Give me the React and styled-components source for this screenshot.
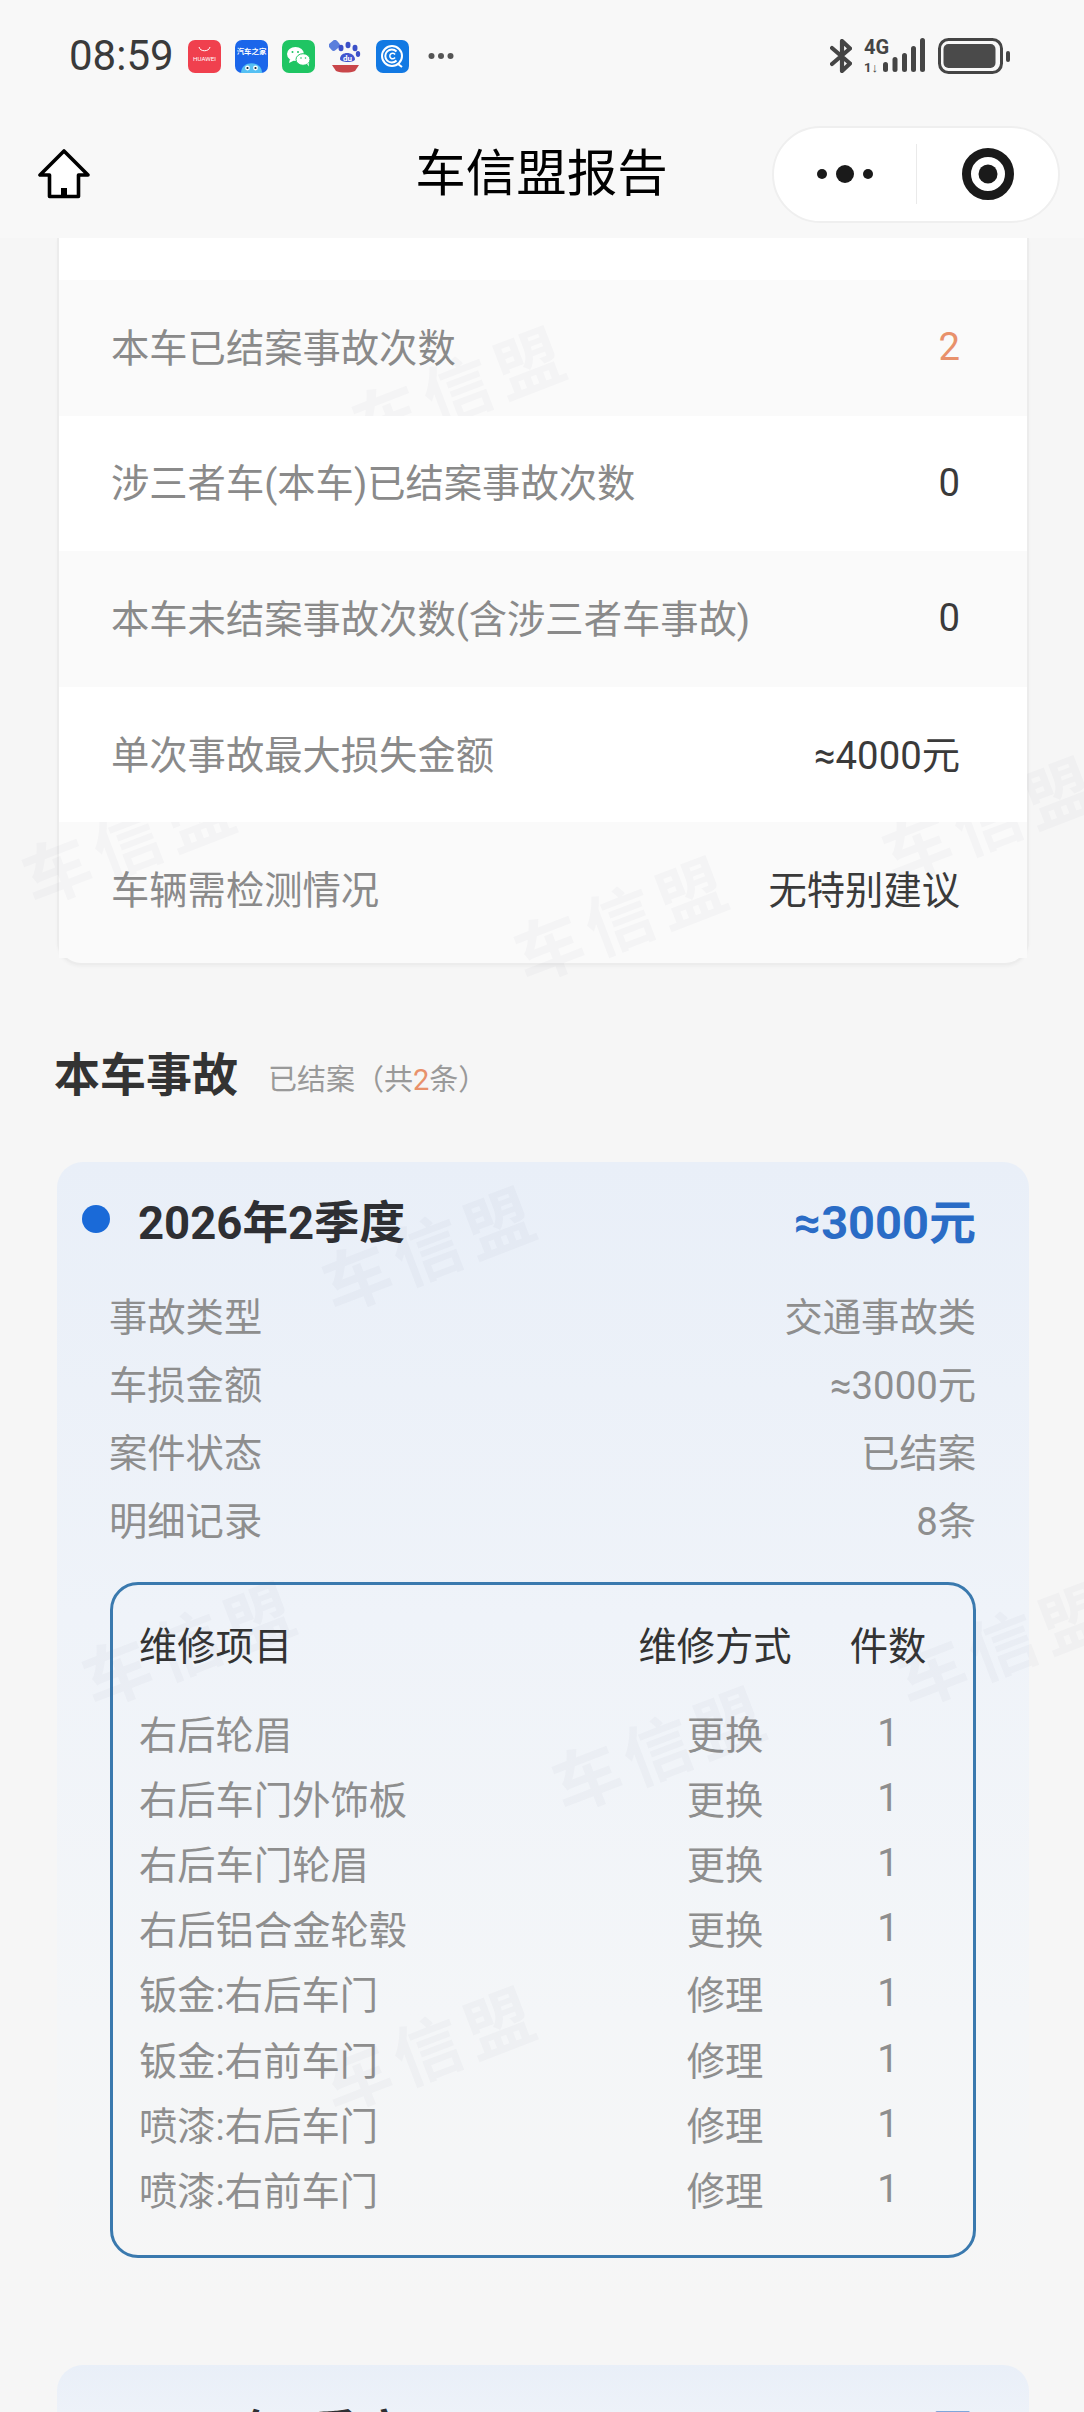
import React from "react";
import styled, { createGlobalStyle } from "styled-components";

const GlobalStyle = createGlobalStyle`
  html, body { margin: 0; padding: 0; width: 1084px; height: 2412px; overflow: hidden; background: #f6f6f6; }
  * { box-sizing: border-box; }
  #root { width: 1084px; height: 2412px; }
`;

const FONT = `Roboto, "Noto Sans CJK SC", sans-serif`;

const Page = styled.div`
  position: relative;
  width: 1084px;
  height: 2412px;
  overflow: hidden;
  background: #f6f6f6;
  font-family: ${FONT};
`;

const Header = styled.header`
  height: 238px;
  background: #f8f8f8;
`;

const StatusBar = styled.div`
  height: 112px;
  padding: 0 74px 0 69px;
  display: flex;
  align-items: center;
  justify-content: space-between;
`;

const StatusGroup = styled.div`
  display: flex;
  align-items: center;
  gap: ${(p) => p.$gap || 14}px;
`;

const Time = styled.span`
  font-size: 42px;
  line-height: 1;
  color: #3a3a3a;
  width: 105px;
`;

const MoreDots = styled.svg`
  width: 26px;
  height: 8px;
  margin-left: 5px;
`;

const NavBar = styled.div`
  height: 124px;
  padding: 0 24px 0 38px;
  display: grid;
  grid-template-columns: 1fr auto 1fr;
  align-items: center;
`;

const Title = styled.h1`
  margin: 0 15px 0 0;
  font-size: 50.5px;
  font-weight: 400;
  color: #000;
  line-height: 1;
`;

const Capsule = styled.div`
  justify-self: end;
  width: 288px;
  height: 97px;
  border-radius: 49px;
  border: 2px solid #efefef;
  background: #fff;
  display: grid;
  grid-template-columns: 1fr 1fr;
  align-items: center;
  justify-items: center;
`;

const CapsuleSlot = styled.div`
  width: 100%;
  height: 60px;
  display: flex;
  align-items: center;
  justify-content: center;
  border-left: ${(p) => (p.$divided ? "1.5px solid #eaeaea" : "0")};
`;

const Content = styled.main`
  padding: 0 55px 0 57px;
`;

const SummaryCard = styled.section`
  width: 972px;
  background: #fafafa;
  border: 2px solid #ececec;
  border-top: 0;
  border-radius: 0 0 24px 24px;
  box-shadow: 0 2px 3px rgba(0, 0, 0, 0.03);
  padding-bottom: 5px;
`;

const CardStub = styled.div`
  position: relative;
  z-index: 2;
  height: 42px;
  background: #fff;
`;

const SummaryRow = styled.div`
  position: relative;
  z-index: ${(p) => (p.$striped ? "auto" : 2)};
  height: 135.6px;
  padding: 0 67px 5px 52px;
  display: flex;
  align-items: center;
  justify-content: space-between;
  font-size: 38.3px;
  background: ${(p) => (p.$striped ? "#fafafa" : "#fff")};
`;

const SummaryLabel = styled.span`
  color: #8a8a8a;
`;

const SummaryValue = styled.span`
  color: ${(p) => (p.$accent ? "#e8916b" : "#3a3a3a")};
  margin-top: ${(p) => (p.$numeric ? 3 : 0)}px;
`;

const SectionHead = styled.div`
  margin: 79px 0 56px -3px;
  height: 62px;
  display: flex;
  align-items: center;
  gap: 30px;
`;

const SectionTitle = styled.h2`
  margin: 0;
  font-size: 46px;
  font-weight: 700;
  color: #333;
  line-height: 1;
`;

const SectionNote = styled.span`
  font-size: 29px;
  color: #999;
  margin-top: 5px;
  em {
    font-style: normal;
    color: #e8916b;
  }
`;

const AccidentCard = styled.section`
  width: 972px;
  padding: ${(p) => p.$top}px 53px 45px 25px;
  border-radius: 26px 26px 0 0;
  background: linear-gradient(180deg, #e9eff8 0%, #eff3f9 40%, #f4f6f8 75%, #f6f6f6 100%);
  & + & {
    margin-top: 61.5px;
  }
`;

const AccidentHead = styled.div`
  height: 60px;
  margin-bottom: 32px;
  display: flex;
  align-items: center;
  gap: 28px;
`;

const Dot = styled.i`
  width: 28px;
  height: 28px;
  border-radius: 50%;
  background: #1a6ad8;
`;

const Quarter = styled.span`
  font-size: 45.5px;
  font-weight: 700;
  color: #2e2f33;
  flex: 1;
`;

const Amount = styled.span`
  font-size: 47px;
  font-weight: 700;
  color: #2a6cc6;
`;

const InfoList = styled.div`
  margin-left: 27px;
`;

const InfoRow = styled.div`
  height: 68px;
  display: flex;
  align-items: center;
  justify-content: space-between;
  font-size: 38.3px;
  color: #8e8e8e;
`;

const RepairBox = styled.div`
  margin: 29.5px 0 0 28px;
  width: 866px;
  padding: 31px 37px 34.5px 26px;
  border: 3px solid #3a79ae;
  border-radius: 28px;
`;

const RepairGrid = styled.div`
  display: grid;
  grid-template-columns: 1fr 190px 96px;
  column-gap: 30px;
  align-items: center;
  font-size: 38.3px;
  height: ${(p) => (p.$head ? 47 : 65.2)}px;
  margin-bottom: ${(p) => (p.$head ? 36 : 0)}px;
  color: ${(p) => (p.$head ? "#333" : "#8e8e8e")};
`;

const MethodCell = styled.span`
  text-align: center;
  padding-left: ${(p) => (p.$head ? 0 : 20)}px;
`;

const CountCell = styled.span`
  text-align: center;
`;

const Watermarks = styled.div`
  position: absolute;
  inset: 0;
  z-index: 1;
  pointer-events: none;
`;

const Watermark = styled.span`
  position: absolute;
  left: ${(p) => p.$x}px;
  top: ${(p) => p.$y}px;
  transform: translate(-50%, -50%) rotate(-21deg);
  font-size: 68px;
  font-weight: 700;
  letter-spacing: 8px;
  color: rgba(90, 100, 120, 0.04);
  white-space: nowrap;
`;

const summary = [
  { label: "本车已结案事故次数", value: "2", accent: true, numeric: true },
  { label: "涉三者车(本车)已结案事故次数", value: "0", numeric: true },
  { label: "本车未结案事故次数(含涉三者车事故)", value: "0", numeric: true },
  { label: "单次事故最大损失金额", value: "≈4000元" },
  { label: "车辆需检测情况", value: "无特别建议" },
];

const info = [
  ["事故类型", "交通事故类"],
  ["车损金额", "≈3000元"],
  ["案件状态", "已结案"],
  ["明细记录", "8条"],
];

const repairs = [
  ["右后轮眉", "更换"],
  ["右后车门外饰板", "更换"],
  ["右后车门轮眉", "更换"],
  ["右后铝合金轮毂", "更换"],
  ["钣金:右后车门", "修理"],
  ["钣金:右前车门", "修理"],
  ["喷漆:右后车门", "修理"],
  ["喷漆:右前车门", "修理"],
];

const marks = [
  [460, 385], [990, 815], [130, 838], [622, 915], [430, 1245],
  [190, 1640], [1005, 1640], [660, 1745], [430, 2045],
];

const HuaweiIcon = () => (
  <svg width="33" height="33" viewBox="0 0 33 33">
    <rect width="33" height="33" rx="7" fill="#f0404e" />
    <path d="M11 7c1 5 10 5 11 0" fill="none" stroke="#fff" strokeWidth="1" />
    <text x="16.5" y="21" fontSize="6.2" fontFamily="Roboto, sans-serif" fill="#fff" textAnchor="middle">HUAWEI</text>
  </svg>
);

const AutohomeIcon = () => (
  <svg width="33" height="33" viewBox="0 0 33 33">
    <rect width="33" height="33" rx="7" fill="#1b66ea" />
    <text x="16.5" y="14" fontSize="7.4" fontFamily="Noto Sans CJK SC, sans-serif" fontWeight="700" fill="#fff" textAnchor="middle">汽车之家</text>
    <path d="M6 33c0-13 21-13 21 0z" fill="#55c0f3" />
    <circle cx="12.5" cy="28" r="2.4" fill="#fff" />
    <circle cx="20.5" cy="28" r="2.4" fill="#fff" />
    <circle cx="12.5" cy="28" r="1.1" fill="#123" />
    <circle cx="20.5" cy="28" r="1.1" fill="#123" />
  </svg>
);

const WechatIcon = () => (
  <svg width="33" height="33" viewBox="0 0 33 33">
    <rect width="33" height="33" rx="7" fill="#1fc563" />
    <ellipse cx="13.5" cy="14" rx="8.5" ry="7" fill="#fff" />
    <path d="M8 19l-1 4 5-2.500z" fill="#fff" />
    <ellipse cx="21" cy="19.500" rx="7" ry="5.800" fill="#fff" stroke="#1fc563" strokeWidth="1" />
    <path d="M25 24l2 2.500-.5-4z" fill="#fff" />
    <circle cx="10.500" cy="12" r="1" fill="#1fc563" />
    <circle cx="16" cy="12" r="1" fill="#1fc563" />
    <circle cx="19" cy="18" r=".8" fill="#1fc563" />
    <circle cx="23.500" cy="18" r=".8" fill="#1fc563" />
  </svg>
);

const BaiduIcon = () => (
  <svg width="33" height="33" viewBox="0 0 33 33">
    <rect x="0" y="1" width="10" height="9" rx="3" fill="#5b7fdc" transform="rotate(-40 5 5)" />
    <ellipse cx="12" cy="8" rx="2.500" ry="3.200" fill="#3c50c8" />
    <ellipse cx="19" cy="5" rx="2.500" ry="3.200" fill="#3c50c8" />
    <ellipse cx="26" cy="8" rx="2.500" ry="3.200" fill="#3c50c8" />
    <ellipse cx="29" cy="14" rx="2.200" ry="3" fill="#3c50c8" />
    <path d="M11 19c0-8 14-8 15 0 .5 4-15 4-15 0z" fill="#4356cf" />
    <text x="18.500" y="21" fontSize="8" fontFamily="Roboto, sans-serif" fontWeight="700" fill="#fff" textAnchor="middle">du</text>
    <path d="M3 25h27l-4 6c-5 2-14 2-19 0z" fill="#c9464a" />
  </svg>
);

const CircleAppIcon = () => (
  <svg width="33" height="33" viewBox="0 0 33 33">
    <rect width="33" height="33" rx="7" fill="#1279e3" />
    <circle cx="16" cy="16" r="10" fill="none" stroke="#fff" strokeWidth="2" />
    <path d="M20.500 11.500a6.500 6.500 0 1 0 0 9" fill="none" stroke="#fff" strokeWidth="2" />
    <path d="M19 14.500a2.800 2.800 0 1 0 0 3" fill="none" stroke="#fff" strokeWidth="1.500" />
    <path d="M22 24l4 3" stroke="#fff" strokeWidth="2" />
  </svg>
);

const BluetoothIcon = () => (
  <svg width="22" height="34" viewBox="0 0 22 34">
    <path d="M2 9l18 15.500-8 7.500V2l8 7.500L2 25" fill="none" stroke="#454545" strokeWidth="4.200" strokeLinecap="round" strokeLinejoin="round" />
  </svg>
);

const SignalIcon = () => (
  <svg width="62" height="42" viewBox="0 -3 62 42">
    <text x="0" y="16" fontSize="20" fontWeight="700" fontFamily="Roboto, sans-serif" fill="#454545">4G</text>
    <text x="0" y="34" fontSize="13" fontWeight="700" fontFamily="Roboto, sans-serif" fill="#454545">1↓</text>
    <rect x="19" y="24" width="5" height="10" rx="2.500" fill="#454545" />
    <rect x="28.500" y="19" width="5" height="15" rx="2.500" fill="#454545" />
    <rect x="38" y="15" width="5" height="19" rx="2.500" fill="#454545" />
    <rect x="47" y="8" width="5" height="26" rx="2.500" fill="#454545" />
    <rect x="56" y="0" width="5" height="34" rx="2.500" fill="#454545" />
  </svg>
);

const BatteryIcon = () => (
  <svg width="72" height="36" viewBox="0 0 72 36">
    <rect x="1.500" y="1.500" width="62" height="33" rx="9" fill="none" stroke="#454545" strokeWidth="3" />
    <rect x="5.500" y="6" width="52" height="24" rx="5" fill="#4a4a4a" />
    <rect x="68" y="13" width="4" height="11" rx="2" fill="#454545" />
  </svg>
);

const HomeIcon = () => (
  <svg width="52" height="50" viewBox="0 0 52 50">
    <path d="M26 2L2 26h9.500v21.500h29V26H50z" fill="#fff" stroke="#000" strokeWidth="3.600" strokeLinejoin="round" />
    <rect x="23" y="39" width="6" height="8" fill="#000" />
  </svg>
);

const MoreIcon = () => (
  <svg width="60" height="20" viewBox="0 0 60 20">
    <circle cx="7" cy="10" r="5" fill="#1a1a1a" />
    <circle cx="30" cy="10" r="9" fill="#1a1a1a" />
    <circle cx="53" cy="10" r="5" fill="#1a1a1a" />
  </svg>
);

const TargetIcon = () => (
  <svg width="54" height="54" viewBox="0 0 54 54">
    <circle cx="27" cy="27" r="21.500" fill="none" stroke="#1a1a1a" strokeWidth="9" />
    <circle cx="27" cy="27" r="9.500" fill="#1a1a1a" />
  </svg>
);

export default function App() {
  return (
    <Page>
      <GlobalStyle />
      <Header>
        <StatusBar>
          <StatusGroup>
            <Time>08:59</Time>
            <HuaweiIcon />
            <AutohomeIcon />
            <WechatIcon />
            <BaiduIcon />
            <CircleAppIcon />
            <MoreDots viewBox="0 0 26 8">
              <circle cx="3.500" cy="4" r="3" fill="#555" />
              <circle cx="13" cy="4" r="3" fill="#555" />
              <circle cx="22.500" cy="4" r="3" fill="#555" />
            </MoreDots>
          </StatusGroup>
          <StatusGroup $gap={12}>
            <BluetoothIcon />
            <SignalIcon />
            <BatteryIcon />
          </StatusGroup>
        </StatusBar>
        <NavBar>
          <HomeIcon />
          <Title>车信盟报告</Title>
          <Capsule>
            <CapsuleSlot>
              <MoreIcon />
            </CapsuleSlot>
            <CapsuleSlot $divided>
              <TargetIcon />
            </CapsuleSlot>
          </Capsule>
        </NavBar>
      </Header>
      <Content>
        <SummaryCard>
          <CardStub />
          {summary.map(({ label, value, accent, numeric }, i) => (
            <SummaryRow key={label} $striped={i % 2 === 0}>
              <SummaryLabel>{label}</SummaryLabel>
              <SummaryValue $accent={accent} $numeric={numeric}>{value}</SummaryValue>
            </SummaryRow>
          ))}
        </SummaryCard>
        <SectionHead>
          <SectionTitle>本车事故</SectionTitle>
          <SectionNote>
            已结案（共<em>2</em>条）
          </SectionNote>
        </SectionHead>
        <AccidentCard $top={27}>
          <AccidentHead>
            <Dot />
            <Quarter>2026年2季度</Quarter>
            <Amount>≈3000元</Amount>
          </AccidentHead>
          <InfoList>
            {info.map(([label, value]) => (
              <InfoRow key={label}>
                <span>{label}</span>
                <span>{value}</span>
              </InfoRow>
            ))}
          </InfoList>
          <RepairBox>
            <RepairGrid $head>
              <span>维修项目</span>
              <MethodCell $head>维修方式</MethodCell>
              <CountCell>件数</CountCell>
            </RepairGrid>
            {repairs.map(([name, method]) => (
              <RepairGrid key={name}>
                <span>{name}</span>
                <MethodCell>{method}</MethodCell>
                <CountCell>1</CountCell>
              </RepairGrid>
            ))}
          </RepairBox>
        </AccidentCard>
        <AccidentCard $top={33}>
          <AccidentHead>
            <Dot />
            <Quarter>2026年3季度</Quarter>
            <Amount>≈4000元</Amount>
          </AccidentHead>
        </AccidentCard>
      </Content>
      <Watermarks>
        {marks.map(([x, y]) => (
          <Watermark key={`${x}-${y}`} $x={x} $y={y}>
            车信盟
          </Watermark>
        ))}
      </Watermarks>
    </Page>
  );
}
